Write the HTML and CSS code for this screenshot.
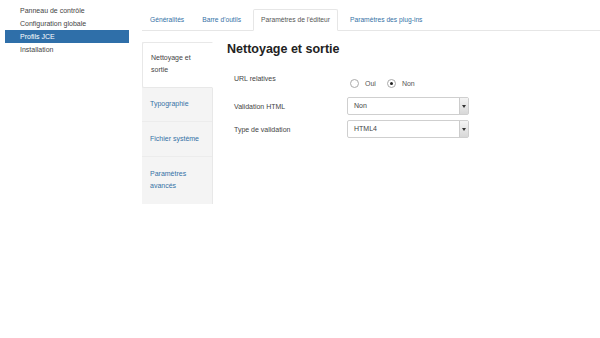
FILE: index.html
```html
<!DOCTYPE html>
<html lang="fr">
<head>
  <meta charset="UTF-8">
  <title>Profils JCE</title>
  <link rel="stylesheet" href="styles.css">
</head>
<body>
  <div class="page">
    <nav class="side-menu">
      <a href="#">Panneau de contrôle</a>
      <a href="#">Configuration globale</a>
      <a href="#" class="active">Profils JCE</a>
      <a href="#">Installation</a>
    </nav>

    <div class="main">
      <ul class="tabs">
        <li><a href="#">Généralités</a></li>
        <li><a href="#">Barre d'outils</a></li>
        <li class="active"><a href="#">Paramètres de l'éditeur</a></li>
        <li><a href="#">Paramètres des plug-ins</a></li>
      </ul>

      <div class="tab-body">
        <ul class="vtabs">
          <li class="active"><a href="#">Nettoyage et sortie</a></li>
          <li><a href="#">Typographie</a></li>
          <li><a href="#">Fichier système</a></li>
          <li><a href="#">Paramètres avancés</a></li>
        </ul>

        <div class="pane">
          <h2>Nettoyage et sortie</h2>
          <div class="row row-radio">
            <label>URL relatives</label>
            <div class="radios">
              <span class="radio"></span><span class="radio-label">Oui</span>
              <span class="radio checked"></span><span class="radio-label">Non</span>
            </div>
          </div>
          <div class="row">
            <label>Validation HTML</label>
            <div class="select">Non<span class="arrow"></span></div>
          </div>
          <div class="row">
            <label>Type de validation</label>
            <div class="select">HTML4<span class="arrow"></span></div>
          </div>
        </div>
      </div>
    </div>
  </div>
</body>
</html>
```

FILE: styles.css
```css
* {
  margin: 0;
  padding: 0;
  box-sizing: border-box;
}

body {
  font-family: 'Liberation Sans', Arial, sans-serif;
  font-size: 7px;
  color: #333;
  background: #fff;
}

a {
  text-decoration: none;
}

.page {
  display: flex;
}

.side-menu {
  width: 130px;
  padding: 4px 0 0 5px;
  display: flex;
  flex-direction: column;
  flex-shrink: 0;
}

.side-menu a {
  display: block;
  height: 13px;
  line-height: 13px;
  padding-left: 15px;
  color: #444;
}

.side-menu a.active {
  width: 124px;
  background: #2f6fa9;
  color: #fff;
}

.main {
  flex: 1;
  padding: 9px 0 0 12px;
}

.tabs {
  list-style: none;
  display: flex;
  border-bottom: 1px solid #e6e6e6;
  height: 22px;
  font-size: 6.7px;
}

.tabs li {
  height: 22px;
}

.tabs a {
  display: block;
  height: 22px;
  line-height: 20px;
  padding: 0 7px;
  margin-right: 2px;
  color: #3572a6;
  border: 1px solid transparent;
  border-radius: 2px 2px 0 0;
}

.tabs li:nth-child(2) a {
  margin-right: 4px;
}

.tabs li.active a {
  color: #555;
  background: #fff;
  border-color: #e6e6e6 #e6e6e6 #fff;
  padding: 0 7px;
  margin-right: 4px;
}

.tab-body {
  display: flex;
  padding-top: 11px;
}

.vtabs {
  list-style: none;
  width: 71px;
  flex-shrink: 0;
  background: #f4f4f4;
  border-right: 1px solid #e8e8e8;
}

.vtabs li {
  border-bottom: 1px solid #ececec;
}

.vtabs li:last-child {
  border-bottom: none;
}

.vtabs a {
  display: block;
  padding: 8px 8px;
  line-height: 12px;
  color: #3572a6;
}

.vtabs li:nth-child(1) a { height: 44px; padding-top: 9px; }
.vtabs li:nth-child(2) a { height: 33px; padding-top: 10px; }
.vtabs li:nth-child(3) a { height: 34px; padding-top: 11px; }
.vtabs li:nth-child(4) a { height: 47px; padding-top: 11px; }

.vtabs li.active {
  background: #fff;
  border: 1px solid #e8e8e8;
  border-right-color: #fff;
  margin-right: -1px;
  border-radius: 2px 0 0 2px;
}

.vtabs li.active a {
  color: #444;
}

.pane {
  padding: 0 0 0 14px;
}

.pane h2 {
  font-size: 12.5px;
  font-weight: bold;
  color: #222;
  margin: 0 0 19px;
  line-height: 14px;
}

.row {
  display: flex;
  align-items: center;
  padding-left: 7px;
  margin-bottom: 5px;
}

.row label {
  width: 113px;
  color: #444;
}

.row-radio {
  align-items: flex-start;
  height: 18px;
  margin-bottom: 4px;
}

.radios {
  display: flex;
  align-items: center;
  margin-top: 4px;
  padding-left: 3px;
}

.radio {
  width: 9px;
  height: 9px;
  border: 1px solid #aaa;
  border-radius: 50%;
  background: #fff;
  position: relative;
}

.radio.checked::after {
  content: "";
  position: absolute;
  left: 2px;
  top: 2px;
  width: 3px;
  height: 3px;
  border-radius: 50%;
  background: #222;
}

.radio-label {
  margin: 0 11px 0 6px;
  color: #555;
}

.radio-label:last-child {
  margin-right: 0;
}

.select {
  width: 122px;
  height: 18px;
  line-height: 16px;
  border: 1px solid #cfcfcf;
  border-radius: 2px;
  padding-left: 6px;
  position: relative;
  color: #444;
  background: #fff;
}

.arrow {
  position: absolute;
  right: 0;
  top: 0;
  width: 9px;
  height: 16px;
  background: linear-gradient(#f4f4f4, #d8d8d8);
  border-left: 1px solid #ccc;
}

.arrow::after {
  content: "";
  position: absolute;
  left: 2px;
  top: 7px;
  border-left: 2px solid transparent;
  border-right: 2px solid transparent;
  border-top: 3px solid #333;
}
```
